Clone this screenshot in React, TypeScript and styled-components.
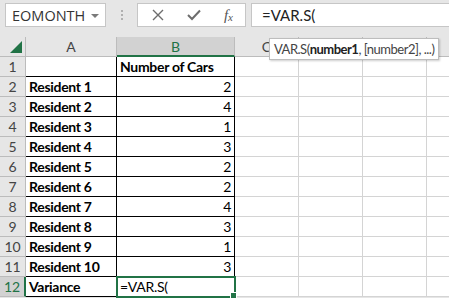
import React from "react";
import styled, { createGlobalStyle } from "styled-components";

const GlobalStyle = createGlobalStyle`
  html, body {
    margin: 0;
    padding: 0;
    background: #e6e6e6;
    overflow: hidden;
  }
  body {
    font-family: Lato, "Liberation Sans", sans-serif;
  }
`;

const rows: [string, string][] = [
  ["", "Number of Cars"],
  ["Resident 1", "2"],
  ["Resident 2", "4"],
  ["Resident 3", "1"],
  ["Resident 4", "3"],
  ["Resident 5", "2"],
  ["Resident 6", "2"],
  ["Resident 7", "4"],
  ["Resident 8", "3"],
  ["Resident 9", "1"],
  ["Resident 10", "3"],
  ["Variance", "=VAR.S("],
];

const columns = ["A", "B", "C", "D", "E", "F"];

function App() {
  return (
    <Sheet.Wrapper>
      <GlobalStyle />

      <Toolbar.Wrapper>
        <Toolbar.NameBox>
          EOMONTH
          <Toolbar.Caret />
        </Toolbar.NameBox>
        <Toolbar.Grip>
          <span />
          <span />
          <span />
        </Toolbar.Grip>
        <Toolbar.Buttons>
          <Toolbar.Icon>
            <svg width="12" height="12" viewBox="0 0 12 12">
              <path d="M1 1 L11 11 M11 1 L1 11" stroke="#6d6d6d" strokeWidth="1.4" fill="none" />
            </svg>
          </Toolbar.Icon>
          <Toolbar.Icon>
            <svg width="14" height="12" viewBox="0 0 14 12">
              <path d="M1 6 L5 10 L13 1.5" stroke="#6d6d6d" strokeWidth="2" fill="none" />
            </svg>
          </Toolbar.Icon>
          <Toolbar.Fx>
            f<sub>x</sub>
          </Toolbar.Fx>
        </Toolbar.Buttons>
        <Toolbar.Input>=VAR.S(</Toolbar.Input>
      </Toolbar.Wrapper>

      <Sheet.Grid>
        <Sheet.Corner>
          <svg width="12" height="12" viewBox="0 0 12 12">
            <polygon points="12,0 12,12 0,12" fill="#217346" />
          </svg>
        </Sheet.Corner>
        {columns.map((c) => (
          <Sheet.ColHeader key={c} $active={c === "B"}>
            {c}
          </Sheet.ColHeader>
        ))}

        {rows.map(([a, b], i) => {
          const n = i + 1;
          const last = n === rows.length;
          return (
            <React.Fragment key={n}>
              <Sheet.RowHeader $active={last}>{n}</Sheet.RowHeader>
              <Sheet.Cell $bold $boxed>
                {a}
              </Sheet.Cell>
              <Sheet.Cell
                $bold={n === 1}
                $boxed
                $right={n > 1 && !last}
                $active={last}
              >
                {b}
                {last && <Sheet.Handle />}
              </Sheet.Cell>
              <Sheet.Cell />
              <Sheet.Cell />
              <Sheet.Cell />
              <Sheet.Cell />
            </React.Fragment>
          );
        })}
      </Sheet.Grid>

      <Tip.Box>
        VAR.S(<b>number1</b>, [number2], ...)
      </Tip.Box>
    </Sheet.Wrapper>
  );
}

//Styled Components
const Toolbar = {
  Wrapper: styled.div`
    display: flex;
    align-items: stretch;
    height: 24px;
    padding: 3px 0 10px 5px;
    background: #e6e6e6;
  `,

  NameBox: styled.div`
    position: relative;
    box-sizing: border-box;
    width: 101px;
    display: flex;
    align-items: center;
    padding-left: 6px;
    background: #ffffff;
    border: 1px solid #c6c6c6;
    font-family: "Open Sans", sans-serif;
    font-size: 14.5px;
    color: #333333;
  `,

  Caret: styled.span`
    position: absolute;
    right: 6px;
    top: 10px;
    width: 0;
    height: 0;
    border-left: 4px solid transparent;
    border-right: 4px solid transparent;
    border-top: 4px solid #7a7a7a;
  `,

  Grip: styled.div`
    width: 31px;
    display: flex;
    flex-direction: column;
    align-items: center;
    justify-content: center;
    gap: 2px;

    span {
      display: block;
      width: 2px;
      height: 2px;
      background: #b0b0b0;
    }
  `,

  Buttons: styled.div`
    width: 109px;
    box-sizing: border-box;
    display: flex;
    align-items: center;
    justify-content: space-between;
    padding: 0 12px 0 14px;
    background: #ffffff;
    border: 1px solid #c6c6c6;
  `,

  Icon: styled.span`
    display: flex;
    align-items: center;
  `,

  Fx: styled.span`
    font-family: "Liberation Serif", serif;
    font-style: italic;
    font-size: 15px;
    color: #555555;
    line-height: 1;

    sub {
      font-size: 11px;
      vertical-align: -1px;
    }
  `,

  Input: styled.div`
    flex: 1;
    margin-left: 5px;
    display: flex;
    align-items: center;
    padding-left: 10px;
    background: #ffffff;
    border: 1px solid #c6c6c6;
    border-right: none;
    font-size: 15px;
    color: #222222;
  `,
};

const Sheet = {
  Wrapper: styled.div`
    position: relative;
    width: 449px;
    height: 298px;
    overflow: hidden;
  `,

  Grid: styled.div`
    display: grid;
    grid-template-columns: 26px 91px 118px 64px 64px 64px 64px;
    grid-auto-rows: 20px;
    background: #ffffff;
  `,

  Corner: styled.div`
    display: flex;
    align-items: flex-end;
    justify-content: flex-end;
    padding: 0 3px 3px 0;
    background: #e6e6e6;
    border-right: 1px solid #bcbcbc;
    border-bottom: 1px solid #bcbcbc;
  `,

  ColHeader: styled.div<{ $active?: boolean }>`
    display: flex;
    align-items: center;
    justify-content: center;
    box-sizing: border-box;
    font-size: 14px;
    background: ${({ $active }) => ($active ? "#d2d2d2" : "#e6e6e6")};
    color: ${({ $active }) => ($active ? "#217346" : "#444444")};
    border-right: 1px solid #bcbcbc;
    border-bottom: ${({ $active }) =>
      $active ? "2px solid #217346" : "1px solid #bcbcbc"};
  `,

  RowHeader: styled.div<{ $active?: boolean }>`
    display: flex;
    align-items: center;
    justify-content: center;
    box-sizing: border-box;
    font-size: 14px;
    background: ${({ $active }) => ($active ? "#d2d2d2" : "#e6e6e6")};
    color: ${({ $active }) => ($active ? "#217346" : "#444444")};
    border-right: ${({ $active }) =>
      $active ? "2px solid #217346" : "1px solid #bcbcbc"};
    border-bottom: 1px solid #bcbcbc;
  `,

  Cell: styled.div<{
    $bold?: boolean;
    $boxed?: boolean;
    $right?: boolean;
    $active?: boolean;
  }>`
    position: relative;
    box-sizing: border-box;
    display: flex;
    align-items: center;
    justify-content: ${({ $right }) => ($right ? "flex-end" : "flex-start")};
    padding: 0 3px;
    font-size: 14px;
    letter-spacing: -0.3px;
    font-weight: ${({ $bold }) => ($bold ? 700 : 400)};
    color: #000000;
    white-space: nowrap;
    border-right: 1px solid ${({ $boxed }) => ($boxed ? "#000000" : "#d4d4d4")};
    border-bottom: 1px solid ${({ $boxed }) => ($boxed ? "#000000" : "#d4d4d4")};

    ${({ $active }) =>
      $active &&
      `
      outline: 2px solid #217346;
      outline-offset: -1px;
      z-index: 1;
    `}
  `,

  Handle: styled.span`
    position: absolute;
    right: -3px;
    bottom: -3px;
    width: 5px;
    height: 5px;
    background: #217346;
    border: 1px solid #ffffff;
  `,
};

const Tip = {
  Box: styled.div`
    position: absolute;
    left: 269px;
    top: 38px;
    height: 20px;
    display: flex;
    align-items: center;
    padding: 0 4px;
    background: #ffffff;
    border: 1px solid #bdbdbd;
    box-shadow: 1px 1px 2px rgba(0, 0, 0, 0.2);
    font-size: 13px;
    letter-spacing: -0.5px;
    color: #444444;
    white-space: nowrap;

    b {
      color: #222222;
    }
  `,
};

export default App;
